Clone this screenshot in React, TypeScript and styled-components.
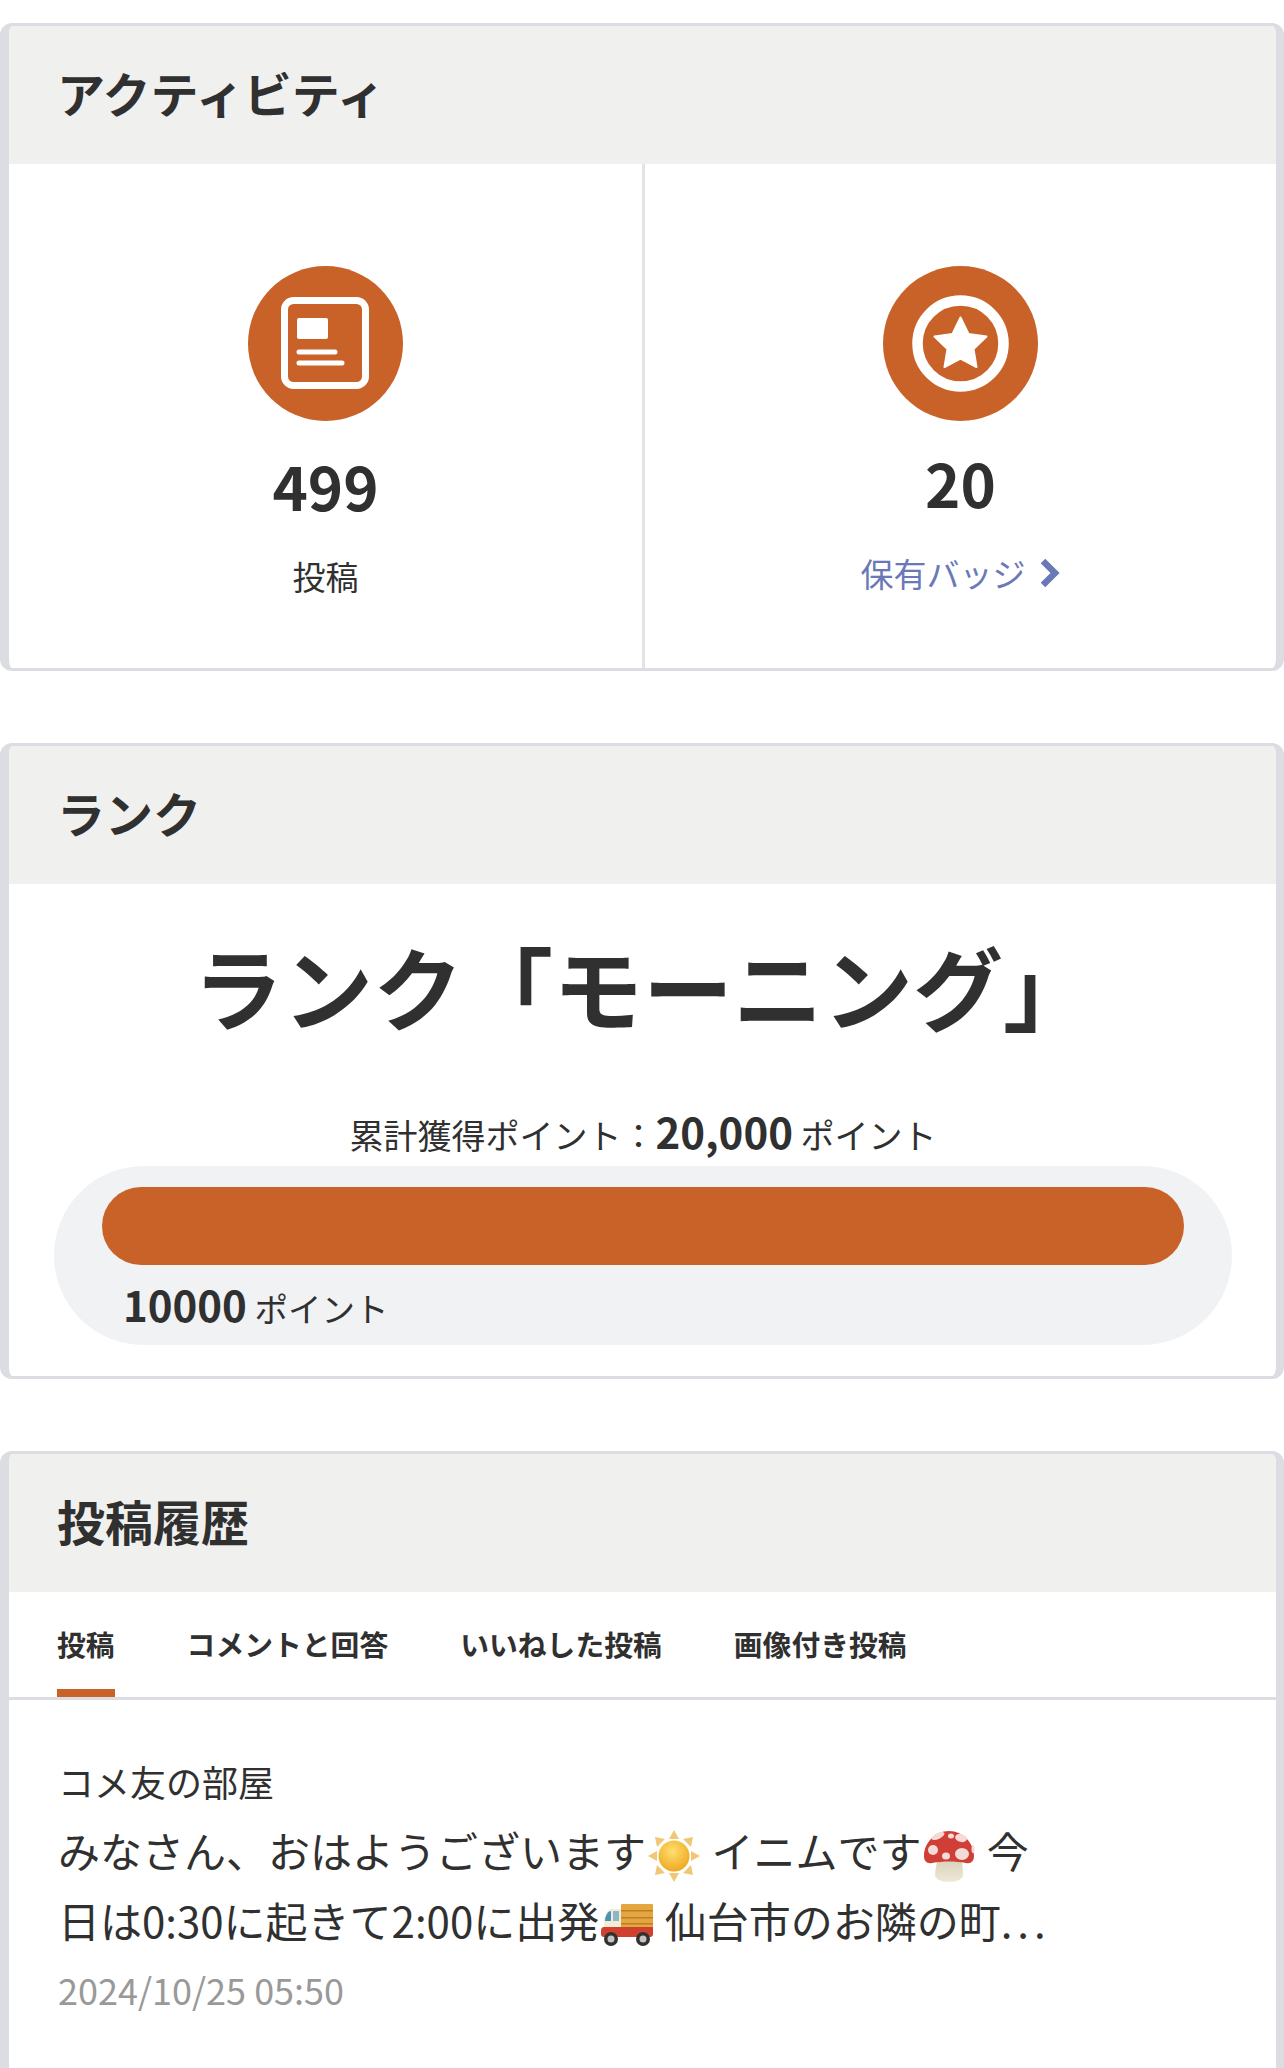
import React from 'react';
import styled, { createGlobalStyle } from 'styled-components';

const GlobalStyle = createGlobalStyle`
  html, body {
    margin: 0;
    padding: 0;
    background: #ffffff;
  }
  body {
    font-family: 'Noto Sans CJK JP', 'Noto Sans', sans-serif;
    color: #303030;
  }
`;

const SunEmoji = (): JSX.Element => (
  <EmojiIcon viewBox="0 0 56 56" width={56} height={56}>
    <defs>
      <radialGradient id="sunFill" cx="45%" cy="35%" r="70%">
        <stop offset="0%" stopColor="#ffdf70" />
        <stop offset="100%" stopColor="#eda51c" />
      </radialGradient>
    </defs>
    <g fill="#efc877">
      <path d="M28 2l5 9H23z" />
      <path d="M28 54l5-9H23z" />
      <path d="M2 28l9-5v10z" />
      <path d="M54 28l-9-5v10z" />
      <path d="M9 9l10 2-8 8z" />
      <path d="M47 9l-10 2 8 8z" />
      <path d="M9 47l10-2-8-8z" />
      <path d="M47 47l-10-2 8-8z" />
    </g>
    <circle cx="28" cy="28" r="15.500" fill="url(#sunFill)" />
  </EmojiIcon>
);

const MushroomEmoji = (): JSX.Element => (
  <EmojiIcon viewBox="0 0 56 56" width={56} height={56}>
    <defs>
      <linearGradient id="stemFill" x1="0" y1="0" x2="0" y2="1">
        <stop offset="0%" stopColor="#d8d0b8" />
        <stop offset="100%" stopColor="#eee8d8" />
      </linearGradient>
    </defs>
    <path d="M16 30h25c0 6 1 12 1 17 0 4-6 7-14 7s-14-3-14-7c0-5 2-11 2-17z" fill="url(#stemFill)" />
    <path d="M28 3C14 3 3 15 3 28c0 5 3 8 8 7 11-2 23-2 34 0 5 1 8-2 8-7C53 15 42 3 28 3z" fill="#cf3f38" />
    <g fill="#f3dcd8">
      <ellipse cx="17" cy="8" rx="7" ry="3" transform="rotate(-25 17 8)" />
      <ellipse cx="30" cy="8" rx="3" ry="2.500" />
      <ellipse cx="40" cy="10" rx="6" ry="4" transform="rotate(15 40 10)" />
      <ellipse cx="12" cy="22" rx="5" ry="5" />
      <ellipse cx="25" cy="28" rx="4" ry="3.500" />
      <ellipse cx="41" cy="26" rx="7" ry="6" />
      <ellipse cx="52" cy="21" rx="1.500" ry="4" />
    </g>
  </EmojiIcon>
);

const TruckEmoji = (): JSX.Element => (
  <EmojiIcon viewBox="0 0 56 56" width={56} height={56}>
    <rect x="22" y="6" width="32" height="24" rx="1" fill="#e5a640" />
    <g fill="#b97f2a">
      <rect x="22" y="12" width="32" height="1.500" />
      <rect x="22" y="19" width="32" height="1.500" />
      <rect x="22" y="25" width="32" height="1.500" />
    </g>
    <path d="M5 24c0-6 3-13 8-13h9v18H5z" fill="#f4ead8" />
    <path d="M6 23c0-5 3-10 6-10v10z" fill="#4c92b5" />
    <rect x="14" y="13" width="6" height="10" fill="#8cb8c4" />
    <path d="M2 33c0-3 1-4 3-4h49v7c0 2-1 3-3 3H5c-2 0-3-1-3-3z" fill="#d0402e" />
    <circle cx="12" cy="41" r="7" fill="#33312f" />
    <circle cx="12" cy="41" r="3.500" fill="#c4c4c4" />
    <circle cx="44" cy="41" r="7" fill="#33312f" />
    <circle cx="44" cy="41" r="3.500" fill="#c4c4c4" />
  </EmojiIcon>
);

const App = (): JSX.Element => {
  return (
    <Page lang="ja">
      <GlobalStyle />
      <Card>
        <CardHeader>アクティビティ</CardHeader>
        <ActivityGrid>
          <ActivityCell>
            <svg width={155} height={155} viewBox="0 0 155 155">
              <circle cx="77.500" cy="77.500" r="77.500" fill="#c96228" />
              <rect x="36.500" y="34.500" width="81" height="85" rx="9" fill="none" stroke="#fff" strokeWidth="7" />
              <rect x="49" y="52" width="31" height="21" rx="2" fill="#fff" />
              <path d="M51 86h36M51 97h43" stroke="#fff" strokeWidth="5" strokeLinecap="round" />
            </svg>
            <Count>499</Count>
            <CountLabel>投稿</CountLabel>
          </ActivityCell>
          <ActivityCell $divided>
            <svg width={155} height={155} viewBox="0 0 155 155">
              <circle cx="77.500" cy="77.500" r="77.500" fill="#c96228" />
              <circle cx="77.500" cy="77.500" r="43" fill="none" stroke="#fff" strokeWidth="10.500" />
              <path
                d="M77.500 51.500l8 16.500 18 2.500-13 12.500 3 18-16-8.500-16 8.500 3-18-13-12.500 18-2.500z"
                fill="#fff"
                stroke="#fff"
                strokeWidth="2"
                strokeLinejoin="round"
              />
            </svg>
            <Count $raised>20</Count>
            <BadgeLink>
              保有バッジ
              <svg width={22} height={30} viewBox="0 0 22 30">
                <path d="M4 3l12 12L4 27" fill="none" stroke="#6b78b8" strokeWidth="6.500" />
              </svg>
            </BadgeLink>
          </ActivityCell>
        </ActivityGrid>
      </Card>

      <Card>
        <CardHeader>ランク</CardHeader>
        <RankBody>
          <RankName>ランク「モーニング」</RankName>
          <TotalPoints>
            累計獲得ポイント：<PointValue>20,000</PointValue> ポイント
          </TotalPoints>
          <ProgressPanel>
            <ProgressBar>
              <ProgressFill style={{ width: '100%' }} />
            </ProgressBar>
            <NextPoints>
              <PointValue>10000</PointValue> ポイント
            </NextPoints>
          </ProgressPanel>
        </RankBody>
      </Card>

      <Card>
        <CardHeader>投稿履歴</CardHeader>
        <TabBar>
          <Tab $active>投稿</Tab>
          <Tab>コメントと回答</Tab>
          <Tab>いいねした投稿</Tab>
          <Tab>画像付き投稿</Tab>
        </TabBar>
        <Post>
          <PostRoom>コメ友の部屋</PostRoom>
          <PostText>
            みなさん、おはようございます
            <SunEmoji /> イニムです
            <MushroomEmoji /> 今
            <br />
            日は0:30に起きて2:00に出発
            <TruckEmoji /> 仙台市のお隣の町<Ellipsis>...</Ellipsis>
          </PostText>
          <PostDate>2024/10/25 05:50</PostDate>
        </Post>
      </Card>
    </Page>
  );
};

const Page = styled.div`
  height: 2068px;
  overflow: hidden;
  padding-top: 23px;
  box-sizing: border-box;
  display: flex;
  flex-direction: column;
  gap: 72px;
`;

const Card = styled.section`
  flex: none;
  box-sizing: border-box;
  border: solid #dcdde2;
  border-width: 3px 8px 3px 9px;
  border-radius: 12px;
  background: #ffffff;
  overflow: hidden;
`;

const CardHeader = styled.h2`
  margin: 0;
  height: 138px;
  box-sizing: border-box;
  padding: 0 0 7px 48px;
  display: flex;
  align-items: center;
  background: #f0f0ef;
  font-size: 48px;
  font-weight: 700;
  color: #303030;
`;

const ActivityGrid = styled.div`
  display: grid;
  grid-template-columns: 633px 1fr;
  height: 504px;
`;

const ActivityCell = styled.div<{ $divided?: boolean }>`
  display: flex;
  flex-direction: column;
  align-items: center;
  padding-top: 102px;
  border-left: ${({ $divided }) => ($divided ? '3px solid #e2e3e5' : 'none')};
`;

const Count = styled.div<{ $raised?: boolean }>`
  margin-top: ${({ $raised }) => ($raised ? '18px' : '21px')};
  font-size: 60px;
  font-weight: 700;
  line-height: 86px;
`;

const CountLabel = styled.div`
  margin-top: 26px;
  font-size: 33px;
  line-height: 44px;
`;

const BadgeLink = styled.a`
  margin-top: 26px;
  display: flex;
  align-items: center;
  gap: 13px;
  font-size: 33px;
  line-height: 44px;
  color: #6b78b8;
`;

const RankBody = styled.div`
  height: 492px;
  padding: 0 44px 0 45px;
  display: flex;
  flex-direction: column;
`;

const RankName = styled.div`
  margin-top: 42px;
  text-align: center;
  font-size: 90px;
  font-weight: 700;
  line-height: 118px;
`;

const TotalPoints = styled.div`
  margin-top: 56px;
  text-align: center;
  font-size: 34px;
  line-height: 62px;
  text-spacing-trim: space-all;
`;

const PointValue = styled.strong`
  font-size: 42px;
  font-weight: 700;
`;

const ProgressPanel = styled.div`
  height: 179px;
  box-sizing: border-box;
  padding: 21px 48px 0;
  border-radius: 90px;
  background: #f1f2f4;
`;

const ProgressBar = styled.div`
  height: 78px;
`;

const ProgressFill = styled.div`
  height: 100%;
  border-radius: 39px;
  background: #c96228;
`;

const NextPoints = styled.div`
  margin-top: 9px;
  padding-left: 21px;
  font-size: 33.500px;
  line-height: 60px;
`;

const TabBar = styled.div`
  display: flex;
  gap: 72px;
  height: 108px;
  box-sizing: border-box;
  padding-left: 48px;
  border-bottom: 3px solid #dcdde2;
`;

const Tab = styled.div<{ $active?: boolean }>`
  height: 105px;
  box-sizing: border-box;
  padding-top: 31px;
  font-size: 28.800px;
  font-weight: 700;
  line-height: 42px;
  border-bottom: ${({ $active }) => ($active ? '8px solid #c96228' : 'none')};
`;

const Post = styled.div`
  padding: 56px 0 100px 49px;
`;

const PostRoom = styled.div`
  font-size: 36px;
  line-height: 50px;
`;

const PostText = styled.div`
  margin-top: 9px;
  font-size: 42px;
  line-height: 70px;
`;

const Ellipsis = styled.span`
  letter-spacing: 5px;
`;

const PostDate = styled.div`
  margin-top: 9px;
  font-size: 36px;
  line-height: 50px;
  color: #999999;
`;

const EmojiIcon = styled.svg`
  display: inline-block;
  vertical-align: middle;
  margin: -10px 0 -8px;
`;

export default App;
